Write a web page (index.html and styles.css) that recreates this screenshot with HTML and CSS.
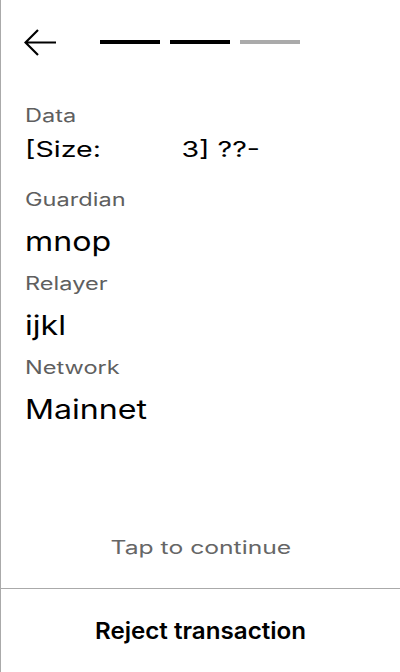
FILE: index.html
```html
<!DOCTYPE html>
<html>
<head>
<meta charset="utf-8">
<link rel="stylesheet" href="styles.css">
</head>
<body>
<div class="screen">
  <header class="top">
    <button class="back" aria-label="Back">
      <svg width="34" height="28" viewBox="0 0 34 28"><path d="M14 1 L1.5 13.5 L14 26 M1.5 13.5 H32" fill="none" stroke="#000" stroke-width="2.2"/></svg>
    </button>
    <div class="steps">
      <span class="step done"></span>
      <span class="step done"></span>
      <span class="step"></span>
    </div>
  </header>
  <main class="fields">
    <div class="field">
      <div class="label"><span class="wide">Data</span></div>
      <div class="value small"><span class="wide">[Size:          3] ??-</span></div>
    </div>
    <div class="field">
      <div class="label"><span class="wide">Guardian</span></div>
      <div class="value"><span class="wide">mnop</span></div>
    </div>
    <div class="field">
      <div class="label"><span class="wide">Relayer</span></div>
      <div class="value"><span class="wide">ijkl</span></div>
    </div>
    <div class="field">
      <div class="label"><span class="wide">Network</span></div>
      <div class="value"><span class="wide">Mainnet</span></div>
    </div>
  </main>
  <div class="tap"><span class="wide">Tap to continue</span></div>
  <footer class="bottom">
    <button class="reject"><span class="wide">Reject transaction</span></button>
  </footer>
</div>
</body>
</html>
```
FILE: styles.css
```css
html, body {
  margin: 0;
  padding: 0;
  background: #fff;
}
.screen {
  width: 399px;
  height: 672px;
  border-left: 1px solid #aaa;
  display: flex;
  flex-direction: column;
  font-family: Inter, "Noto Sans", sans-serif;
  color: #000;
}
.wide {
  display: inline-block;
  white-space: pre;
  transform-origin: left center;
}
.top {
  display: flex;
  align-items: center;
  height: 28px;
  padding: 29px 0 0 23px;
}
.back {
  border: 0;
  background: none;
  padding: 0;
  width: 34px;
  height: 28px;
  display: block;
}
.back svg { display: block; }
.steps {
  display: flex;
  gap: 10px;
  margin-left: 42px;
  margin-top: -2px;
}
.step {
  width: 60px;
  height: 4px;
  background: #aaa;
}
.step.done { background: #000; }
.fields {
  padding: 47px 0 0 24px;
  display: flex;
  flex-direction: column;
}
.field {
  height: 84px;
  display: flex;
  flex-direction: column;
}
.label {
  font-size: 18px;
  line-height: 24px;
  color: #5f5f5f;
}
.label .wide { transform: scaleX(1.31); }
.value {
  font-size: 27px;
  line-height: 60px;
}
.value .wide { transform: scaleX(1.19); }
.value.small {
  font-size: 22px;
  line-height: 43px;
}
.value.small .wide { transform: scaleX(1.3); }
.tap {
  margin-top: auto;
  text-align: center;
  font-size: 18px;
  line-height: 24px;
  color: #666;
  padding-bottom: 28px;
}
.tap .wide { transform: scaleX(1.37); transform-origin: center; }
.bottom {
  border-top: 1px solid #aaa;
  height: 83px;
  display: flex;
  align-items: center;
  justify-content: center;
}
.reject {
  border: 0;
  background: none;
  font-family: Inter, "Noto Sans", sans-serif;
  font-size: 23px;
  font-weight: 600;
  color: #000;
  padding: 0;
}
.reject .wide { transform: scaleX(1.05); transform-origin: center; }
```
